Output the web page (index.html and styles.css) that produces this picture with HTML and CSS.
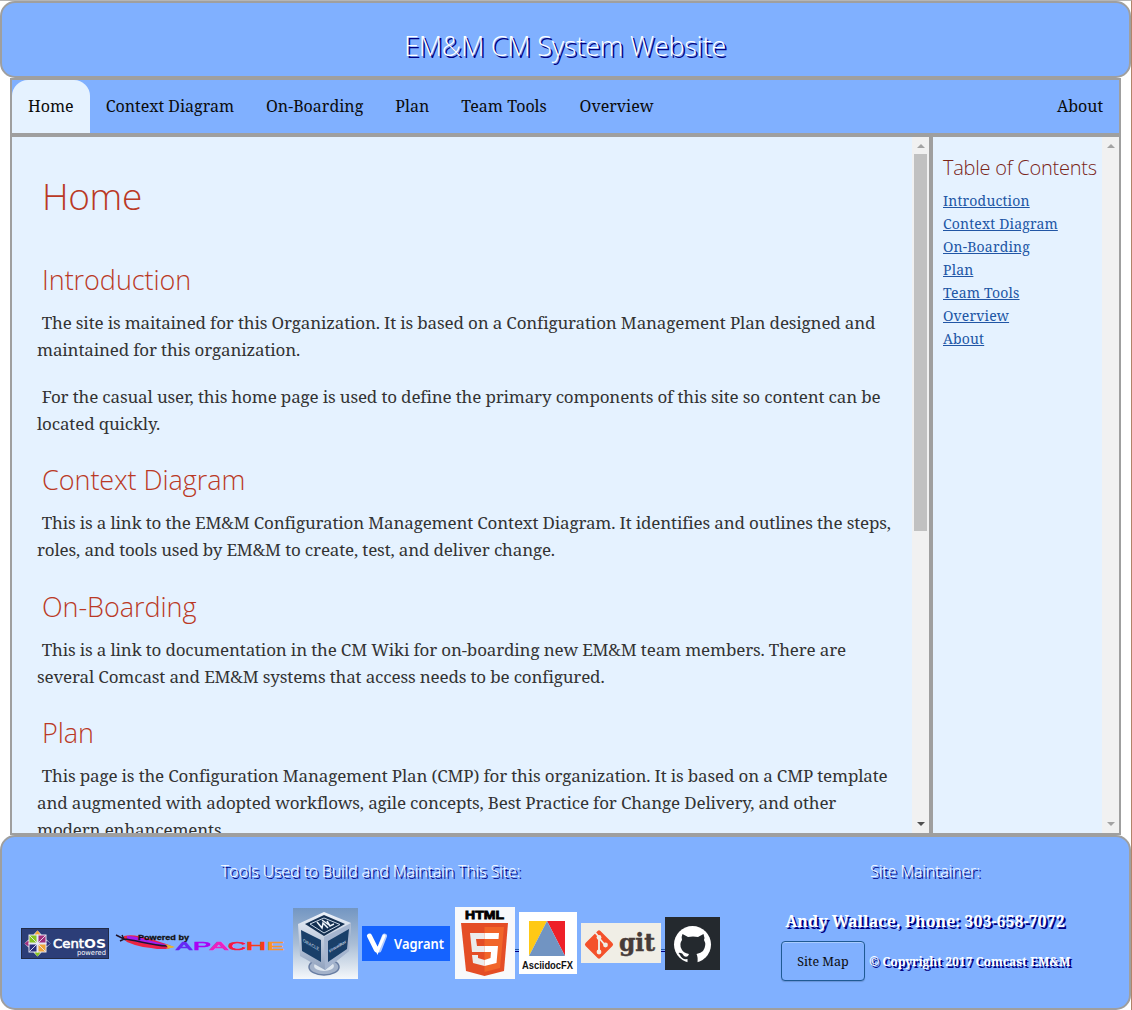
FILE: index.html
```html
<!DOCTYPE html>
<html lang="en">
<head>
<meta charset="utf-8">
<title>EM&amp;M CM System Website</title>
<link rel="stylesheet" href="styles.css">
</head>
<body>
<header class="banner"><h2 class="banner-title">EM&amp;M CM System Website</h2></header>

<div class="frame">
  <nav class="tabs">
    <a class="tab tab-active"><span class="t-home">Home</span></a>
    <a class="tab"><span class="t-context">Context Diagram</span></a>
    <a class="tab"><span class="t-onboard">On-Boarding</span></a>
    <a class="tab"><span class="t-plan">Plan</span></a>
    <a class="tab"><span class="t-tools">Team Tools</span></a>
    <a class="tab"><span class="t-over">Overview</span></a>
    <a class="tab tab-right"><span class="t-about">About</span></a>
  </nav>

  <div class="panes">
    <section class="pane pane-main">
      <main class="content">
        <h1>Home</h1>
        <h2>Introduction</h2>
        <p>&nbsp;The site is maitained for this Organization. It is based on a Configuration Management Plan designed and<br>maintained for this organization.</p>
        <p>&nbsp;For the casual user, this home page is used to define the primary components of this site so content can be<br>located quickly.</p>
        <h2>Context Diagram</h2>
        <p>&nbsp;This is a link to the EM&amp;M Configuration Management Context Diagram. It identifies and outlines the steps,<br>roles, and tools used by EM&amp;M to create, test, and deliver change.</p>
        <h2>On-Boarding</h2>
        <p>&nbsp;This is a link to documentation in the CM Wiki for on-boarding new EM&amp;M team members. There are<br>several Comcast and EM&amp;M systems that access needs to be configured.</p>
        <h2>Plan</h2>
        <p>&nbsp;This page is the Configuration Management Plan (CMP) for this organization. It is based on a CMP template<br>and augmented with adopted workflows, agile concepts, Best Practice for Change Delivery, and other<br>modern enhancements.</p>
      </main>
      <div class="scrollbar">
        <svg class="arrow" viewBox="0 0 17 17"><path d="M5 11L9 7L13 11Z" fill="#a3a3a3"/></svg>
        <div class="thumb"></div>
        <svg class="arrow arrow-end" viewBox="0 0 17 17"><path d="M5 6H13L9 10Z" fill="#505050"/></svg>
      </div>
    </section>
    <aside class="pane pane-toc">
      <div class="toc">
        <h3>Table of Contents</h3>
        <ul>
          <li><a>Introduction</a></li>
          <li><a>Context Diagram</a></li>
          <li><a>On-Boarding</a></li>
          <li><a>Plan</a></li>
          <li><a>Team Tools</a></li>
          <li><a>Overview</a></li>
          <li><a>About</a></li>
        </ul>
      </div>
      <div class="scrollbar">
        <svg class="arrow" viewBox="0 0 17 17"><path d="M5 11L9 7L13 11Z" fill="#a3a3a3"/></svg>
        <svg class="arrow arrow-end" viewBox="0 0 17 17"><path d="M5 6H13L9 10Z" fill="#a3a3a3"/></svg>
      </div>
    </aside>
  </div>
</div>

<footer class="footer">
  <div class="tools">
    <h4>Tools Used to Build and Maintain This Site:</h4>
    <div class="logos">
      <svg class="centos" width="88" height="31" viewBox="0 0 88 31">
        <rect x=".5" y=".5" width="87" height="30" fill="#2c3e78" stroke="#222b46"/>
        <g transform="translate(16.500 15.500)">
          <path d="M0-13L4-9H9V-4L13 0L9 4V9H4L0 13L-4 9H-9V4L-13 0L-9-4V-9H-4Z" fill="#e8e8f4"/>
          <path d="M-8-8H-1V-1H-8Z" fill="#87c51f"/><path d="M1-8H8V-1H1Z" fill="#a02c7c"/>
          <path d="M-8 1H-1V8H-8Z" fill="#2b2f7c"/><path d="M1 1H8V8H1Z" fill="#f0a53a"/>
          <path d="M0-13L3-9H-3Z" fill="#f0a53a"/><path d="M13 0L9 3V-3Z" fill="#2b2f7c"/><path d="M0 13L3 9H-3Z" fill="#87c51f"/><path d="M-13 0L-9 3V-3Z" fill="#a02c7c"/>
          <path d="M-8-8L8 8M8-8L-8 8M0-9V9M-9 0H9" stroke="#e8e8f4" stroke-width=".9" fill="none"/>
        </g>
        <text x="32" y="20" class="logo-verdana" font-size="13" textLength="31" lengthAdjust="spacingAndGlyphs" fill="#fff" stroke="#fff" stroke-width=".6">Cent</text>
        <text x="63" y="20" class="logo-verdana" font-size="13" font-weight="bold" textLength="22" lengthAdjust="spacingAndGlyphs" fill="#fff">OS</text>
        <text x="56" y="27" class="logo-verdana" font-size="7" textLength="29" lengthAdjust="spacingAndGlyphs" fill="#fff">powered</text>
      </svg>
      <svg class="apache" width="175" height="22" viewBox="0 0 175 22">
        <defs>
          <linearGradient id="feather"><stop offset="0" stop-color="#e8283c"/><stop offset=".6" stop-color="#f0204a"/><stop offset=".85" stop-color="#d8205a"/><stop offset="1" stop-color="#f2b020"/></linearGradient>
        </defs>
        <g transform="translate(1 1)">
          <path d="M9 3C16 1 25 3 31 5C41 7 51 11 59 14L52 16H42L36 15L28 14L20 12L12 9L9 6Z" fill="url(#feather)"/>
          <path d="M12 3C23 3 35 8 48 11L55 13L38 12L22 9L12 6Z" fill="#a01ef0"/>
          <path d="M1 2L9 6L7 2M5 8L9 6C21 7 35 12 52 13" fill="none" stroke="#20152c" stroke-width="1.500"/>
          <path d="M50 11L60 14L51 16L53 14Z" fill="#e8b52e"/>
        </g>
        <text x="24" y="8" class="logo-sans" font-size="7.500" font-weight="bold" textLength="51" lengthAdjust="spacingAndGlyphs" fill="#111" stroke="#111" stroke-width=".3">Powered by</text>
        <g class="logo-sans" font-size="10" stroke-width=".6">
          <text x="62" y="18" textLength="16" lengthAdjust="spacingAndGlyphs" fill="#6428f4" stroke="#6428f4">A</text>
          <text x="79" y="18" textLength="18" lengthAdjust="spacingAndGlyphs" fill="#aa00f5" stroke="#aa00f5">P</text>
          <text x="96" y="18" textLength="18" lengthAdjust="spacingAndGlyphs" fill="#eb20c0" stroke="#eb20c0">A</text>
          <text x="114" y="18" textLength="18" lengthAdjust="spacingAndGlyphs" fill="#f51a40" stroke="#f51a40">C</text>
          <text x="132" y="18" textLength="20" lengthAdjust="spacingAndGlyphs" fill="#f63c18" stroke="#f63c18">H</text>
          <text x="153" y="18" textLength="17" lengthAdjust="spacingAndGlyphs" fill="#f99429" stroke="#f99429">E</text>
        </g>
      </svg>
      <svg class="vbox" width="65" height="71" viewBox="0 0 65 71">
        <defs>
          <linearGradient id="vboxBg" x2="0" y2="1"><stop offset="0" stop-color="#7396c2"/><stop offset=".5" stop-color="#a9bdd5"/><stop offset="1" stop-color="#f5f8fb"/></linearGradient>
          <linearGradient id="vboxEdge" x2="0" y2="1"><stop offset="0" stop-color="#eef3fb"/><stop offset="1" stop-color="#8fa1bd"/></linearGradient>
        </defs>
        <rect width="65" height="71" fill="url(#vboxBg)"/>
        <ellipse cx="31" cy="59" rx="15" ry="8" fill="#a3b2ca" stroke="#687da2" stroke-width="1.500"/><ellipse cx="31" cy="58" rx="10" ry="5" fill="#dfe7f0"/>
        <path d="M31 4L58 15L56 43L32 62L7 48L5 16Z" fill="url(#vboxEdge)"/>
        <path d="M31 29L58 15L56 43L32 62Z" fill="#a5b5cf"/>
        <path d="M31 7L52 16L31 28L12 16Z" fill="#142f50"/>
        <path d="M31 10L47 16.500L31 25L17 16Z" fill="none" stroke="#cbd9e9"/>
        <path d="M24 14L29 20L30 15L35 20M29 12L36 17M34 13L37 18L41 16" stroke="#eef4fa" stroke-width="1.500" fill="none"/>
        <path d="M8 22L28 32V54L9 43ZM35 33L56 21L54 41L35 54Z" fill="#193f69"/>
        <text transform="translate(10 34) skewY(29)" class="logo-sans" font-size="5" font-weight="bold" textLength="16" lengthAdjust="spacingAndGlyphs" fill="#9eb5ce">ORACLE</text>
        <text transform="translate(36 45) skewY(-31)" class="logo-sans" font-size="4.500" font-weight="bold" textLength="17" lengthAdjust="spacingAndGlyphs" fill="#c7d5e4">VirtualBox</text>
      </svg>
      <svg class="vagrant" width="88" height="35" viewBox="0 0 88 35">
        <rect width="88" height="35" fill="#1563ff"/>
        <path d="M17 24L22.500 10" stroke="#b5cdff" stroke-width="5" stroke-linecap="round"/>
        <path d="M7.500 10L14.500 24" stroke="#fff" stroke-width="5" stroke-linecap="round"/>
        <path d="M14 21L15.500 25L22 10" stroke="#fff" stroke-width="3" stroke-linecap="round" fill="none"/>
        <text x="32" y="23" class="logo-noto" font-size="14" font-weight="600" textLength="50" lengthAdjust="spacingAndGlyphs" fill="#fff">Vagrant</text>
      </svg>
      <svg class="html5" width="60" height="72" viewBox="0 0 60 72">
        <rect width="60" height="72" fill="#f8f9fb"/>
        <text x="10" y="11.500" class="logo-sans" font-size="11.500" font-weight="bold" textLength="39" lengthAdjust="spacingAndGlyphs" fill="#000" stroke="#000" stroke-width=".8">HTML</text>
        <path d="M6 16H53L49 64L29.500 69L11 64Z" fill="#e44d26"/><path d="M29.500 20H49L45 61L29.500 65Z" fill="#f16529"/>
        <path d="M29.500 26H15L17 45H29.500V39H22L21 32H29.500ZM29.500 53L23 51V48H17L18 56L29.500 59Z" fill="#ebebeb"/>
        <path d="M29.500 26H44L43.500 32H29.500ZM29.500 39H43L41.500 56L29.500 59V53L35.500 51L36 45H29.500Z" fill="#fff"/>
      </svg>
      <span class="link-gap"></span>
      <svg class="ascii" width="58" height="62" viewBox="0 0 58 62">
        <rect width="58" height="62" fill="#fff"/><path d="M10 9H28L10 44Z" fill="#ffc915"/><path d="M28 9H46V44Z" fill="#ee2028"/><path d="M28 9L46 44H10Z" fill="#7194c2"/>
        <text x="3" y="57" class="logo-sans" font-size="10" font-weight="bold" textLength="51" lengthAdjust="spacingAndGlyphs" fill="#111">AsciidocFX</text>
      </svg>
      <svg class="git" width="80" height="40" viewBox="0 0 80 40">
        <rect width="80" height="40" fill="#f0eee6"/>
        <rect x="7.500" y="11" width="21" height="21" rx="2" transform="rotate(45 18 21.500)" fill="#f4512b"/>
        <path d="M12 7L18 14V29M18 15L24 22" stroke="#f0eee6" stroke-width="1.900" fill="none"/><circle cx="18" cy="14.500" r="2.400" fill="#f0eee6"/><circle cx="18" cy="29" r="2.400" fill="#f0eee6"/><circle cx="24.500" cy="22" r="2.400" fill="#f0eee6"/>
        <text x="38" y="28" class="logo-serif" font-size="25" font-weight="bold" textLength="36" lengthAdjust="spacingAndGlyphs" fill="#473b38" stroke="#473b38" stroke-width=".5">git</text>
      </svg>
      <span class="link-gap"></span>
      <svg class="github" width="55" height="53" viewBox="0 0 55 53">
        <rect width="55" height="53" fill="#24292e"/><circle cx="27.500" cy="27.500" r="18.500" fill="#fff"/>
        <path d="M17.500 17L23 20Q28 19 33 20L38.500 17Q40 21 39 23Q42 28 38 34Q36 36 31.500 37Q33 39 32.500 47H22.500V42Q17 43 15 38L13.500 36Q17 35 19 39Q21 40.500 23 39L24 37Q18 36 16.500 32Q14 27 17 23Q16 20 17.500 17Z" fill="#24292e"/>
      </svg>
    </div>
  </div>
  <div class="maintainer">
    <h4>Site Maintainer:</h4>
    <div class="contact">Andy Wallace, Phone: 303-658-7072</div>
    <div class="legal"><button class="sitemap">Site Map</button><span class="copyright">© Copyright 2017 Comcast EM&amp;M</span></div>
  </div>
</footer>
</body>
</html>
```
FILE: styles.css
```css
* { box-sizing: border-box; }
body {
  margin: 0;
  height: 1010px;
  display: flex;
  flex-direction: column;
  overflow: hidden;
  border-top: 1px solid #b5b5b5;
  border-right: 1px solid #b08468;
  background: #fff;
  font-family: "Noto Serif", "Droid Serif", "DejaVu Serif Condensed", "DejaVu Serif", serif;
}
h1, h2, h3, h4 { margin: 0; font-family: "Open Sans", sans-serif; font-weight: 300; white-space: nowrap; }
svg { display: block; flex: none; }

.banner {
  flex: none;
  height: 77px;
  border: 2px solid #9f9f9f;
  border-radius: 15px;
  background: #80b0ff;
  text-align: center;
  padding: 27px 1px 0 0;
}
.banner-title { font-size: 27px; line-height: 32px; letter-spacing: -.23px; color: #fff; text-shadow: 2px 2px 0 #000080; }

.frame { flex: 1; min-height: 0; margin: 0 10px; display: flex; flex-direction: column; }
.tabs { flex: none; display: flex; height: 57px; border: 2px solid #9f9f9f; background: #80b0ff; }
.tab { padding: 0 16px; line-height: 52px; font-size: 16px; color: #0b0b0b; white-space: nowrap; }
.tab span { display: block; }
.tab-active { background: #e5f2ff; border-radius: 16px 16px 0 0; }
.tab-right { margin-left: auto; }
.t-home { width: 45.700px; }
.t-context { width: 128.300px; }
.t-onboard { width: 97.300px; }
.t-plan { width: 34px; }
.t-tools { width: 86.300px; }
.t-over { width: 74px; }
.t-about { width: 46px; }

.panes { flex: 1; min-height: 0; display: flex; }
.pane { display: flex; border: 2px solid #9f9f9f; background: #e5f2ff; min-height: 0; }
.pane-main { flex: 1; min-width: 0; }
.pane-toc { width: 190px; }
.content { flex: 1; min-width: 0; overflow: hidden; padding: 37px 0 0 25px; color: #333; }
.content h1 { margin-left: 5px; font-size: 37px; line-height: 44px; letter-spacing: -.37px; color: #ba3925; }
.content h2 { margin: 27.400px 0 12.700px 5px; font-size: 27px; line-height: 32.400px; letter-spacing: -.05px; color: #ba3925; }
.content h1 + h2 { margin-top: 45.600px; }
.content p { margin: 0 0 20px; font-size: 17px; line-height: 27px; letter-spacing: -.16px; white-space: nowrap; }
.content p::first-letter { margin-left: .5px; }

.scrollbar { width: 17px; flex: none; display: flex; flex-direction: column; background: #f1f1f1; }
.arrow { width: 17px; height: 17px; }
.arrow-end { margin-top: auto; }
.thumb { width: 13px; height: 377px; margin-left: 2px; background: #c1c1c1; }

.toc { flex: 1; min-width: 0; padding: 19px 0 0 10px; }
.toc h3 { font-size: 20px; line-height: 24px; letter-spacing: -.25px; color: #7a2518; }
.toc ul { list-style: none; margin: 9px 0 0; padding: 0; }
.toc li { line-height: 23px; font-size: 14px; letter-spacing: .17px; }
.toc a { color: #2156a5; text-decoration: underline; white-space: nowrap; }

.footer {
  flex: none;
  display: flex;
  height: 175px;
  border: 2px solid #9f9f9f;
  border-radius: 15px;
  background: #80b0ff;
  color: #fff;
}
.footer h4 { font-size: 16px; line-height: 22px; letter-spacing: -.12px; text-align: center; text-shadow: 2px 2px 0 #000080; }
.tools { width: 737px; padding-top: 23px; }
.logos { display: flex; align-items: center; height: 72px; margin: 25px 0 0 19px; }
.apache { margin-left: 5px; }
.vbox, .vagrant, .git { margin-left: 4px; }
.html5 { margin-left: 5px; }
.link-gap { width: 4px; height: 3px; margin-top: 14px; border-top: 1px solid #2156a5; border-bottom: 1px solid #000080; }
.logo-verdana { font-family: "DejaVu Sans", sans-serif; }
.logo-sans { font-family: "Liberation Sans", sans-serif; }
.logo-noto { font-family: "Noto Sans", sans-serif; }
.logo-serif { font-family: "DejaVu Serif", serif; }

.maintainer { width: 372px; padding-top: 23px; }
.contact { margin-top: 27px; font-size: 16px; line-height: 24px; font-weight: bold; text-align: center; text-shadow: 2px 2px 0 #000080; white-space: nowrap; }
.legal { display: flex; align-items: center; margin: 8px 0 0 42px; }
.sitemap {
  flex: none;
  width: 84px;
  height: 40px;
  padding: 0;
  border: 1px solid #1f5a94;
  border-radius: 4px;
  background: #80b0ff;
  box-shadow: inset 0 1px 0 #a9ccff, 0 1px 1px #6a94d6;
  color: #0b0b0b;
  font: 12.500px "Noto Serif", "Droid Serif", "DejaVu Serif Condensed", "DejaVu Serif", serif;
}
.copyright { margin-left: 4px; font-size: 12px; font-weight: bold; text-shadow: 2px 2px 0 #000080; white-space: nowrap; }
```
